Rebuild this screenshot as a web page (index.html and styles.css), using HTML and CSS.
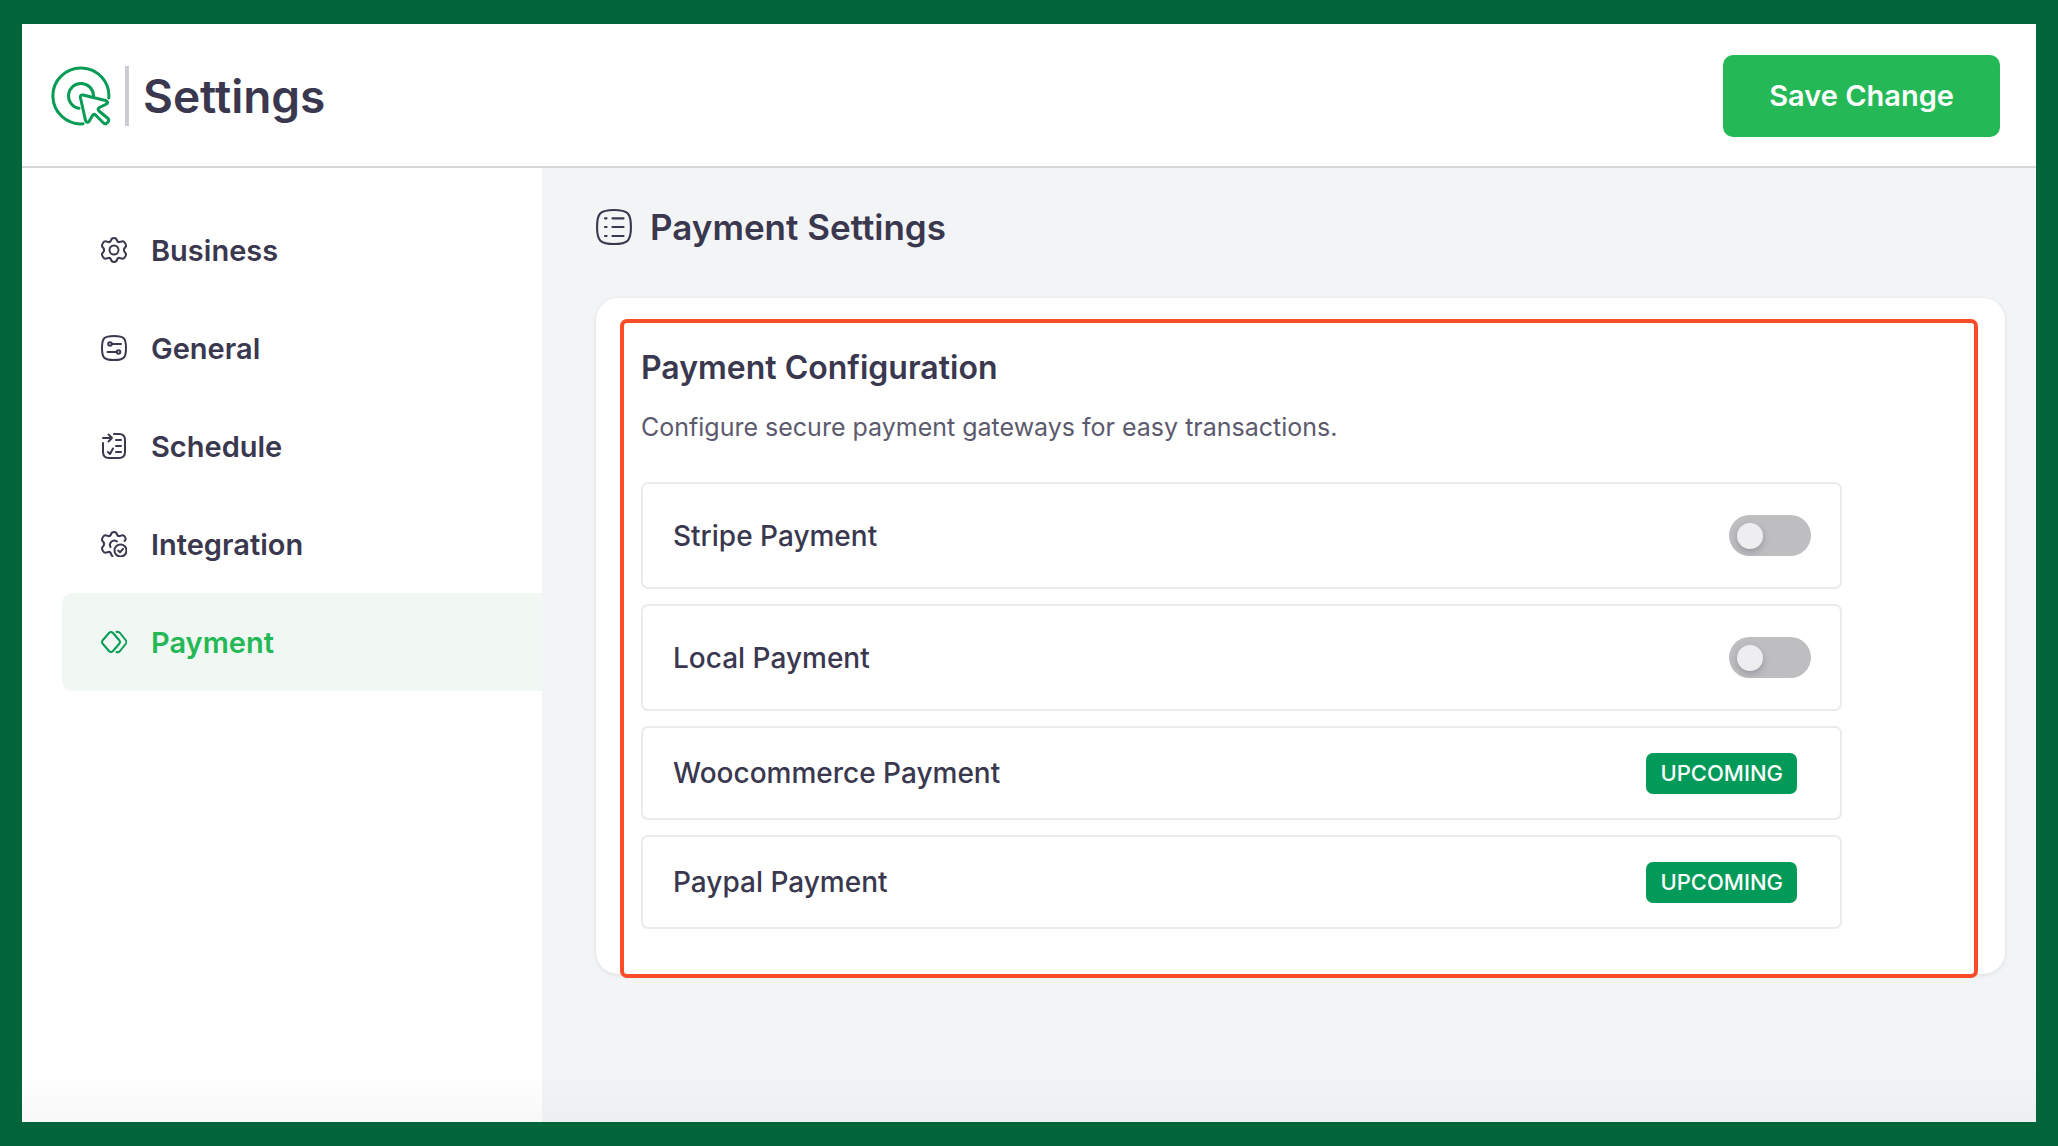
FILE: index.html
```html
<!DOCTYPE html>
<html lang="en">
<head>
<meta charset="utf-8">
<meta name="viewport" content="width=device-width, initial-scale=1">
<title>Settings</title>
<link rel="stylesheet" href="styles.css">
</head>
<body>
<div class="app">
  <header class="topbar">
    <svg class="logo" viewBox="0 0 60 60" aria-hidden="true">
      <path d="M57.8 32A28 28 0 1 0 32 57.8"/>
      <path d="M42.5 30A12.5 12.5 0 1 0 28 42.3"/>
      <path d="M32 29L54.5 34.5Q58 36 55.5 38L48.500 41.5Q46 43 48 45L57 52.5Q58.5 54 57 56L55.5 57.3Q54 58.5 52.5 57L44.5 49Q42.5 47.5 41.5 49.5L38 55.5Q36 57.5 34.5 54.5L29.5 32Q29 28.5 32 29Z"/>
    </svg>
    <span class="divider"></span>
    <h1 class="page-title">Settings</h1>
    <button class="save" type="button">Save Change</button>
  </header>
  <div class="body">
    <nav class="sidebar" aria-label="Settings">
      <a class="nav-item" href="#business">
        <svg class="icon" viewBox="0 0 26 26" aria-hidden="true">
          <circle cx="13" cy="13" r="4.5"/>
          <path d="M10 3.5Q10.500 1 13 1T16 3.5Q17 5.8 19.5 4.8Q22.5 3.3 24 6Q26 9 24 10.5Q21.8 13 24 15.5Q26 17 24 20Q22.5 22.7 19.5 21.2Q17 20.2 16 22.5Q15.5 25 13 25T10 22.5Q9 20.2 6.5 21.2Q3.5 22.7 2 20Q0 17 2 15.5Q4.2 13 2 10.5Q0 9 2 6Q3.5 3.3 6.5 4.8Q9 5.8 10 3.5Z"/>
        </svg>
        <span>Business</span>
      </a>
      <a class="nav-item" href="#general">
        <svg class="icon" viewBox="0 0 26 26" aria-hidden="true">
          <path d="M1 13C1 3 3 1 13 1S25 3 25 13 23 25 13 25 1 23 1 13Z"/>
          <circle cx="9" cy="9" r="1.8"/><path d="M10.8 9H20"/>
          <circle cx="17.5" cy="17" r="1.8"/><path d="M15.7 17H6.5"/>
        </svg>
        <span>General</span>
      </a>
      <a class="nav-item" href="#schedule">
        <svg class="icon" viewBox="0 0 26 26" aria-hidden="true">
          <path d="M13 1H18Q24 1 24 7V19Q24 25 18 25H8Q2 25 2 19V10"/>
          <path d="M2 5H11M7.5 1.5L11 5L7.5 8.5M15 7H20M15 13H20M15 19H20M7 19L9 21L12 15.5"/>
        </svg>
        <span>Schedule</span>
      </a>
      <a class="nav-item" href="#integration">
        <svg class="icon" viewBox="0 0 26 26" aria-hidden="true">
          <path d="M11.5 25.3Q10 24 10 22.5Q9 20.2 6.500 21.2Q3.5 22.7 2 20Q0 17 2 15.5Q4.2 13 2 10.5Q0 9 2 6Q3.5 3.3 6.5 4.8Q9 5.8 10 3.5Q10.5 1 13 1T16 3.5Q17 5.8 19.5 4.8Q22.5 3.3 24 6Q25.5 8.5 23.5 10"/>
          <path d="M16 10.5Q13 8.300 10 11Q8 13.5 9.5 16"/>
          <circle cx="19.5" cy="19.5" r="6"/><path d="M17.2 19.5L19 21.3L22 17.8"/>
        </svg>
        <span>Integration</span>
      </a>
      <a class="nav-item active" href="#payment" aria-current="page">
        <svg class="icon" viewBox="0 0 26 26" aria-hidden="true">
          <path d="M1.5 11.5L8 4Q10 1.8 12 4L18.5 11.5Q19.5 13 18.5 14.5L12 22Q10 24 8 22L1.5 14.5Q.5 13 1.5 11.5Z"/>
          <path d="M15.5 3Q17.5 2.3 19 4L25 11.5Q26 13 25 14.5L19 22Q17.5 23.7 15.5 23"/>
        </svg>
        <span>Payment</span>
      </a>
    </nav>
    <main class="content">
      <div class="section-head">
        <svg class="section-icon" viewBox="0 0 34 34" aria-hidden="true">
          <path d="M1 17C1 4 4 1 17 1S33 4 33 17 30 33 17 33 1 30 1 17Z"/>
          <path d="M8.5 8.8H10M15.5 8.8H26M8.5 17H10M15.5 17H26M8.5 25.5H10M15.5 25.5H26"/>
        </svg>
        <h2 class="section-title">Payment Settings</h2>
      </div>
      <section class="card">
        <div class="highlight"></div>
        <h3 class="card-title">Payment Configuration</h3>
        <p class="card-text">Configure secure payment gateways for easy transactions.</p>
        <div class="rows">
          <div class="row">
            <label for="stripe">Stripe Payment</label>
            <input class="switch" id="stripe" type="checkbox" role="switch">
          </div>
          <div class="row">
            <label for="local">Local Payment</label>
            <input class="switch" id="local" type="checkbox" role="switch">
          </div>
          <div class="row row-upcoming">
            <span>Woocommerce Payment</span>
            <span class="badge">UPCOMING</span>
          </div>
          <div class="row row-upcoming">
            <span>Paypal Payment</span>
            <span class="badge">UPCOMING</span>
          </div>
        </div>
      </section>
    </main>
  </div>
</div>
</body>
</html>
```
FILE: styles.css
```css
* { box-sizing: border-box; }

body {
  margin: 0;
  min-height: 100vh;
  display: flex;
  padding: 24px 22px;
  background: #00653a;
  color: #3a384f;
  font-family: Inter, "Liberation Sans", sans-serif;
}

h1, h2, h3, p { margin: 0; }

svg {
  fill: none;
  stroke: currentColor;
  stroke-linecap: round;
  stroke-linejoin: round;
  flex: none;
}

.app {
  flex: 1;
  display: flex;
  flex-direction: column;
  background: linear-gradient(to top, #f8f8f8, #fff 50px);
}

.topbar {
  display: flex;
  align-items: center;
  padding: 31px 36px 29px 29px;
  border-bottom: 2px solid #d5d7db;
}

.logo {
  width: 60px;
  height: 60px;
  color: #069c56;
  stroke-width: 3;
}

.divider {
  width: 4px;
  height: 60px;
  margin: 0 14px;
  background: #cccbd2;
}

.page-title {
  font-size: 46px;
  line-height: 60px;
  font-weight: 600;
}

.save {
  margin-left: auto;
  padding: 0 46px;
  height: 82px;
  border: 0;
  border-radius: 10px;
  background: #24b956;
  color: #fff;
  font: 600 29px/40px Inter, "Liberation Sans", sans-serif;
}

.body {
  flex: 1;
  display: flex;
}

.sidebar {
  width: 520px;
  flex: none;
  padding: 33px 0 33px 40px;
}

.nav-item {
  display: flex;
  align-items: center;
  gap: 24px;
  height: 98px;
  padding-left: 39px;
  border-radius: 10px 0 0 10px;
  color: #3a384f;
  font-size: 29px;
  font-weight: 600;
  text-decoration: none;
}

.nav-item.active {
  background: #f1f7f2;
  color: #24b956;
}

.icon {
  width: 26px;
  height: 26px;
  stroke-width: 2;
}

.active .icon { color: #069c56; }

.content {
  flex: 1;
  min-width: 0;
  padding: 35px 31px 35px 54px;
  background: linear-gradient(to top, #eeeff1, #f3f4f6 50px);
}

.section-head {
  display: flex;
  align-items: center;
  gap: 18px;
  margin-bottom: 47px;
}

.section-icon {
  width: 36px;
  height: 36px;
  stroke-width: 2;
}

.section-title {
  font-size: 35px;
  line-height: 48px;
  font-weight: 600;
}

.card {
  position: relative;
  padding: 48px 163px 45px 45px;
  border-radius: 22px;
  background: #fff;
  box-shadow: 0 1px 4px rgba(0, 0, 0, 0.1);
}

/* Outline drawn over the card's content */
.highlight {
  position: absolute;
  inset: 21px 27px -4px 24px;
  border: 4px solid #fa4d27;
  border-radius: 7px;
  pointer-events: none;
}

.card-title {
  font-size: 32px;
  line-height: 44px;
  font-weight: 600;
}

.card-text {
  margin-top: 20px;
  color: #5c5a6d;
  font-size: 25px;
  line-height: 34px;
}

.rows {
  display: grid;
  gap: 15px;
  margin-top: 38px;
}

.row {
  display: flex;
  align-items: center;
  justify-content: space-between;
  height: 107px;
  padding: 0 29px 0 30px;
  border: 2px solid #ebebec;
  border-radius: 7px;
  font-size: 28px;
  font-weight: 500;
}

.row-upcoming {
  height: 94px;
  padding-right: 43px;
}

.switch {
  appearance: none;
  display: flex;
  align-items: center;
  width: 82px;
  height: 41px;
  margin: 0;
  padding: 0 8px;
  border-radius: 21px;
  background: #bebec0;
}

.switch::before {
  content: "";
  width: 26px;
  height: 26px;
  border-radius: 50%;
  background: #eeeef0;
  box-shadow: 0 3px 6px rgba(60, 60, 90, 0.3);
}

.switch:checked {
  justify-content: flex-end;
  background: #24b956;
}

.badge {
  padding: 0 14px;
  border-radius: 7px;
  background: #029a58;
  color: #fff;
  font-size: 22px;
  line-height: 41px;
}
```
